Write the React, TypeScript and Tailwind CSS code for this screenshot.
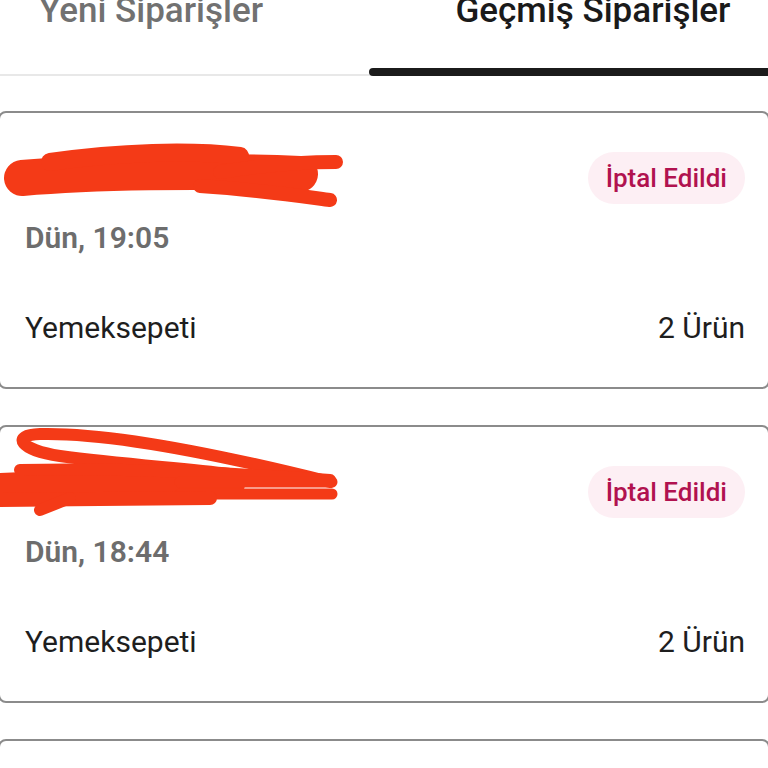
import React from 'react'

interface Order {
  id: number
  time: string
  store: string
  count: string
  scribble: 'a' | 'b'
}

const orders: Order[] = [
  { id: 1, time: 'Dün, 19:05', store: 'Yemeksepeti', count: '2 Ürün', scribble: 'a' },
  { id: 2, time: 'Dün, 18:44', store: 'Yemeksepeti', count: '2 Ürün', scribble: 'b' },
  { id: 3, time: 'Dün, 17:12', store: 'Yemeksepeti', count: '1 Ürün', scribble: 'a' },
]

const red = '#f43a17'

// redaction scribble drawn over the customer name
const Scribble: React.FC<{ kind: 'a' | 'b' }> = ({ kind }) => (
  <svg width="345" height="100" viewBox="0 0 345 100" className="-ml-[25px] overflow-visible shrink-0">
    {kind === 'a' ? (
      <g fill="none" stroke={red} strokeLinecap="round" strokeLinejoin="round">
        <path d="M22 50 C90 44 200 42 300 46" strokeWidth="36" />
        <path d="M50 34 C120 24 190 22 240 28" strokeWidth="18" />
        <path d="M220 44 C270 36 310 34 336 34" strokeWidth="14" />
        <path d="M200 58 C260 62 300 68 330 72" strokeWidth="14" />
      </g>
    ) : (
      <g fill="none" stroke={red} strokeLinecap="round" strokeLinejoin="round">
        <path d="M330 40 C250 20 120 -10 40 -8 C10 -7 20 8 60 14 C120 22 180 26 230 32" strokeWidth="12" />
        <path d="M0 46 C80 42 160 40 230 42" strokeWidth="30" />
        <path d="M20 28 C120 26 220 30 330 38" strokeWidth="12" />
        <path d="M180 40 L332 40" strokeWidth="11" />
        <path d="M180 52 L332 52" strokeWidth="11" />
        <path d="M0 58 C70 57 150 57 210 56" strokeWidth="14" />
        <path d="M70 56 L40 68" strokeWidth="12" />
      </g>
    )}
  </svg>
)

const OrderCard: React.FC<{ order: Order }> = ({ order }) => (
  <div className="h-[278px] border-2 border-[#8b8b8b] rounded-[8px] bg-white pt-[37px] pl-[25px] pr-[23px] shrink-0">
    <div className="h-[56px] flex items-center justify-between">
      <Scribble kind={order.scribble} />
      <span className="h-[52px] px-[18px] flex items-center rounded-full bg-[#fdeff4] text-[#b1124f] text-[26px] font-medium">
        İptal Edildi
      </span>
    </div>
    <div className="mt-[14px] leading-[36px] text-[30px] font-semibold text-[#6d6d6d]">{order.time}</div>
    <div className="mt-[54px] flex justify-between leading-[36px] text-[30px] text-[#1e1e1e]">
      <span>{order.store}</span>
      <span>{order.count}</span>
    </div>
  </div>
)

export default function App() {
  return (
    <div
      className="w-[768px] h-[768px] overflow-hidden bg-white"
      style={{ fontFamily: 'Roboto, "Noto Sans", sans-serif' }}
    >
      <div className="w-[884px] -ml-[70px] flex">
        <div className="w-1/2 flex flex-col">
          <div className="-mt-[10px] h-[78px] text-center leading-[42px] text-[35px] font-medium text-[#717171]">
            Yeni Siparişler
          </div>
          <div className="h-[8px] flex items-end">
            <div className="h-[2px] w-full bg-[#e8e8e8]" />
          </div>
        </div>
        <div className="w-1/2 flex flex-col">
          <div className="-mt-[10px] h-[78px] text-center leading-[42px] text-[35px] font-medium text-[#1a1a1a]">
            Geçmiş Siparişler
          </div>
          <div className="h-[8px] -ml-[3px] rounded-full bg-[#1b1b1b]" />
        </div>
      </div>
      <div className="mt-[35px] -ml-[2px] w-[772px] flex flex-col gap-[36px]">
        {orders.map(o => (
          <OrderCard key={o.id} order={o} />
        ))}
      </div>
    </div>
  )
}
